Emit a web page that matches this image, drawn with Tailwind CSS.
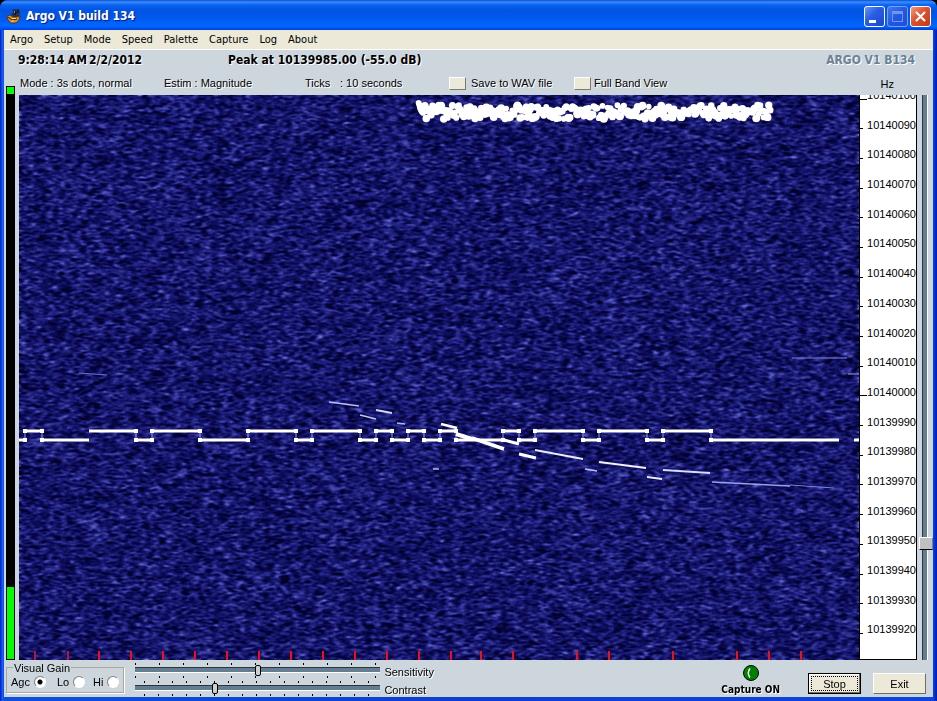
<!DOCTYPE html>
<html lang="en">
<head>
    <meta charset="UTF-8">
    <meta name="viewport" content="width=device-width, initial-scale=1.0">
    <title>Argo V1 build 134</title>
    <script src="https://cdn.jsdelivr.net/npm/@tailwindcss/browser@4"></script>
</head>
<body class="bg-black h-screen overflow-hidden font-['Liberation_Sans',Arial,sans-serif] text-[11px] leading-4 text-black">
    <div class="h-full flex flex-col rounded-t-lg overflow-hidden bg-[#0a3fd8]">
        <!-- Title bar -->
        <header class="h-[30px] shrink-0 flex items-center pl-1.5 pr-1.5 pt-0.5 bg-[linear-gradient(to_bottom,#0a4fd0_0,#3a8cff_2px,#0a62f0_5px,#0254e3_10px,#0058ee_18px,#0066ff_25px,#0061fb_27px,#003dd7_30px)]">
            <svg class="w-4 h-4 shrink-0" viewBox="0 0 16 16" aria-hidden="true">
                <path d="M6 2l3-1 4 1 1 3-1 4-4 1-2-2-2-1 1-2h2z" fill="#26324f"/>
                <path d="M8 3l2 1-1 3M12 1l1 3M7 5l5-1" stroke="#0b1020" fill="none"/>
                <path d="M1 8l3-1 3 2 3 0 4-1-1 4-3 3H5l-3-3z" fill="#d98a1c" stroke="#3a2208" stroke-width=".7"/>
                <path d="M2 9l4 3 5-1" stroke="#3a2208" fill="none"/>
                <path d="M6 10.5h4M5 13h3" stroke="#ffd37a"/>
                <path d="M8 4h1" stroke="#fff"/>
            </svg>
            <h1 class="ml-1 flex-1 whitespace-nowrap font-['DejaVu_Sans_Condensed','DejaVu_Sans',sans-serif] font-bold text-[12px] leading-4 text-white [text-shadow:1px_1px_1px_#0a1883]">Argo V1 build 134</h1>
            <div class="flex gap-0.5">
                <button type="button" aria-label="Minimize" class="w-[21px] h-[21px] rounded-[3px] border border-white bg-[linear-gradient(135deg,#6d96f5,#2a5fe8_40%,#1a45c8)] flex items-end pl-1 pb-[3px]">
                    <span class="block w-[7px] h-[3px] bg-white"></span>
                </button>
                <button type="button" aria-label="Maximize" disabled class="w-[21px] h-[21px] rounded-[3px] border border-[#7b9ff0] bg-[linear-gradient(135deg,#4478ec,#2158e2_50%,#1a4fdc)] flex items-center justify-center">
                    <span class="block w-[11px] h-[11px] border border-t-[3px] border-[#6f95ef]"></span>
                </button>
                <button type="button" aria-label="Close" class="w-[21px] h-[21px] rounded-[3px] border border-white bg-[linear-gradient(135deg,#f09a80,#e0502c_45%,#c03a18)] flex items-center justify-center">
                    <svg class="w-[13px] h-[13px]" viewBox="0 0 13 13" aria-hidden="true"><path d="M2 2l9 9M11 2l-9 9" stroke="#fff" stroke-width="2.2"/></svg>
                </button>
            </div>
        </header>

        <div class="flex-1 min-h-0 flex flex-col px-1 pb-1 bg-[linear-gradient(to_right,#0026d0_0,#0026d0_1px,#1b62f5_2px,#0c50e0_4px,#0c3fd0_50%,#0a46e0_calc(100%-4px),#0030d0_calc(100%-2px),#001cb0_100%)]">
            <!-- Menu -->
            <nav class="h-5 shrink-0 flex items-center gap-[11px] pl-1.5 bg-[#ece9d8] border-b border-white font-['DejaVu_Sans_Condensed','DejaVu_Sans',sans-serif] text-[11px]">
                <a href="#">Argo</a>
                <a href="#">Setup</a>
                <a href="#">Mode</a>
                <a href="#">Speed</a>
                <a href="#">Palette</a>
                <a href="#">Capture</a>
                <a href="#">Log</a>
                <a href="#">About</a>
            </nav>

            <main class="flex-1 min-h-0 flex flex-col bg-[#ced6dd]">
                <!-- Clock and peak -->
                <div class="h-6 shrink-0 flex items-start pt-0.5 pl-3.5 pr-[18px] whitespace-nowrap font-['DejaVu_Sans_Condensed','DejaVu_Sans',sans-serif] font-bold text-[12px] [text-shadow:1px_1px_0_#fff]">
                    <span class="w-[71px]">9:28:14 AM</span>
                    <span class="w-[139px]">2/2/2012</span>
                    <span class="flex-1">Peak at 10139985.00 (-55.0 dB)</span>
                    <span class="text-[#6b8296]">ARGO V1 B134</span>
                </div>
                <!-- Mode line -->
                <div class="h-[21px] shrink-0 flex items-start pl-0.5 pr-[39px] whitespace-nowrap [text-shadow:1px_1px_0_#fff]">
                    <span class="self-end w-[9px] h-[9px] bg-[#00ff00] border border-black mr-[5px]"></span>
                    <span class="w-36 pt-px">Mode : 3s dots, normal</span>
                    <span class="w-[141px] pt-px">Estim : Magnitude</span>
                    <span class="w-[35px] pt-px">Ticks</span>
                    <span class="w-[109px] pt-px">: 10 seconds</span>
                    <label class="flex items-center w-[125px] pt-px">
                        <input type="checkbox" class="appearance-none w-[17px] h-[13px] mr-[5px] bg-[#ece9d8] border border-t-white border-l-white border-b-[#7c7a6c] border-r-[#7c7a6c]">
                        Save to WAV file
                    </label>
                    <label class="flex items-center flex-1 pt-px">
                        <input type="checkbox" class="appearance-none w-[17px] h-[13px] mr-[3px] bg-[#ece9d8] border border-t-white border-l-white border-b-[#7c7a6c] border-r-[#7c7a6c]">
                        Full Band View
                    </label>
                    <span class="pt-0.5 [text-shadow:none]">Hz</span>
                </div>

                <div class="flex-1 min-h-0 flex">
                    <!-- Level meter -->
                    <div class="ml-0.5 mr-1 w-[9px] shrink-0 bg-black p-px flex flex-col justify-end">
                        <div class="w-full bg-[#00ff00]" style="height: 12.8%"></div>
                    </div>
                    <!-- Waterfall -->
                    <div class="flex-1 min-w-0 min-h-0">
                        <canvas id="waterfall" width="840" height="565" class="block w-full h-full bg-[#10125c]"></canvas>
                    </div>
                    <!-- Frequency scale -->
                    <div id="scale" class="w-[58px] shrink-0 bg-white border-x border-b border-black flex flex-col overflow-hidden text-[11px]"></div>
                    <input type="range" min="0" max="100" value="80" aria-label="Tuning" class="ml-0.5 w-3.5 shrink-0 h-full appearance-none [writing-mode:vertical-lr] bg-[linear-gradient(to_right,transparent_3px,#2b3640_3px,#2b3640_4px,#647d91_4px,#647d91_8px,#fff_8px,#fff_9px,transparent_9px)] [&::-webkit-slider-thumb]:appearance-none [&::-webkit-slider-thumb]:w-3.5 [&::-webkit-slider-thumb]:h-[13px] [&::-webkit-slider-thumb]:bg-[#c0c0c0] [&::-webkit-slider-thumb]:border [&::-webkit-slider-thumb]:border-t-white [&::-webkit-slider-thumb]:border-l-white [&::-webkit-slider-thumb]:border-r-[#808080] [&::-webkit-slider-thumb]:border-b-black">
                </div>

                <!-- Bottom controls -->
                <footer class="h-[37px] shrink-0 flex items-start pl-0.5 pr-[7px] whitespace-nowrap">
                    <fieldset class="w-[118px] h-[33px] border border-[#aca899] shadow-[1px_1px_0_#fff] px-1">
                        <legend class="ml-0.5 px-px leading-4 h-3.5">Visual Gain</legend>
                        <div class="flex items-center">
                            <label class="flex items-center gap-1 w-[46px]">Agc <input type="radio" name="gain" checked class="appearance-none w-3 h-3 rounded-full border border-[#808080] border-r-white border-b-white bg-[radial-gradient(circle,#000_2px,#fff_3px)]"></label>
                            <label class="flex items-center gap-1 w-9">Lo <input type="radio" name="gain" class="appearance-none w-3 h-3 rounded-full border border-[#808080] border-r-white border-b-white bg-white"></label>
                            <label class="flex items-center gap-1">Hi <input type="radio" name="gain" class="appearance-none w-3 h-3 rounded-full border border-[#808080] border-r-white border-b-white bg-white"></label>
                        </div>
                    </fieldset>
                    <div class="ml-[11px] pt-[3px] w-[245px] flex flex-col">
                        <div class="h-[18px] flex flex-col">
                            <div class="h-0.5 w-full bg-[repeating-linear-gradient(to_right,#000_0,#000_1px,transparent_1px,transparent_24px)]"></div>
                            <input id="sensitivity" type="range" min="0" max="100" value="50" class="block w-full h-[11px] appearance-none bg-[linear-gradient(to_bottom,transparent_2px,#2b3640_2px,#2b3640_3px,#647d91_3px,#647d91_7px,#fff_7px,#fff_8px,transparent_8px)] [&::-webkit-slider-thumb]:appearance-none [&::-webkit-slider-thumb]:w-1.5 [&::-webkit-slider-thumb]:h-[11px] [&::-webkit-slider-thumb]:rounded-xs [&::-webkit-slider-thumb]:border [&::-webkit-slider-thumb]:border-black [&::-webkit-slider-thumb]:bg-[#d0d0d0]">
                            <div class="h-0.5 w-full bg-[repeating-linear-gradient(to_right,#000_0,#000_1px,transparent_1px,transparent_24px)]"></div>
                        </div>
                        <div class="h-4 flex flex-col">
                            <div class="h-0.5 ml-[9px] mr-[9px] bg-[repeating-linear-gradient(to_right,#000_0,#000_1px,transparent_1px,transparent_14px)]"></div>
                            <input id="contrast" type="range" min="0" max="100" value="32" class="block w-full h-[11px] appearance-none bg-[linear-gradient(to_bottom,transparent_2px,#2b3640_2px,#2b3640_3px,#647d91_3px,#647d91_7px,#fff_7px,#fff_8px,transparent_8px)] [&::-webkit-slider-thumb]:appearance-none [&::-webkit-slider-thumb]:w-1.5 [&::-webkit-slider-thumb]:h-[11px] [&::-webkit-slider-thumb]:rounded-xs [&::-webkit-slider-thumb]:border [&::-webkit-slider-thumb]:border-black [&::-webkit-slider-thumb]:bg-[#d0d0d0]">
                            <div class="h-0.5 ml-[9px] mr-[9px] bg-[repeating-linear-gradient(to_right,#000_0,#000_1px,transparent_1px,transparent_14px)]"></div>
                        </div>
                    </div>
                    <div class="ml-1 pt-1 flex flex-col gap-0.5 [text-shadow:1px_1px_0_#fff]">
                        <label for="sensitivity">Sensitivity</label>
                        <label for="contrast">Contrast</label>
                    </div>
                    <div class="ml-auto mr-7 pt-[5px] flex flex-col items-center">
                        <svg class="w-4 h-4" viewBox="0 0 16 16" aria-hidden="true">
                            <circle cx="8" cy="8" r="7.5" fill="#008000" stroke="#000"/>
                            <path d="M7 3.5Q3.500 8 7 12.5" stroke="#fff" stroke-width="1.4" fill="none"/>
                        </svg>
                        <span class="pt-px font-['DejaVu_Sans_Condensed','DejaVu_Sans',sans-serif] font-bold text-[10px] [text-shadow:1px_1px_0_#fff]">Capture ON</span>
                    </div>
                    <button type="button" class="mt-[13px] mr-3 w-[53px] h-[21px] p-0.5 bg-[#ece9d8] border border-black shadow-[inset_-1px_-1px_0_#716f64,inset_1px_1px_0_#fff]">
                        <span class="h-full flex items-center justify-center outline-1 outline-dotted -outline-offset-1 outline-black">Stop</span>
                    </button>
                    <button type="button" class="mt-[13px] w-[53px] h-[21px] bg-[#ece9d8] border border-t-white border-l-white border-b-[#716f64] border-r-[#716f64]">Exit</button>
                </footer>
            </main>
        </div>
    </div>

    <script>
        // frequency scale
        const scale = document.getElementById('scale');
        for (let hz = 10140100; hz >= 10139920; hz -= 10) {
            const row = document.createElement('div');
            row.className = 'flex-1 min-h-0';
            const tick = hz % 100 === 0 ? 'w-[7px]' : 'w-[3px]';
            row.innerHTML = '<div class="h-0 flex items-center justify-between">' +
                '<span class="h-px mt-2 bg-black ' + tick + '"></span>' +
                '<span>' + hz + '</span></div>';
            scale.appendChild(row);
        }

        const canvas = document.getElementById('waterfall');
        const ctx = canvas.getContext('2d');
        const W = canvas.width, H = canvas.height;
        let seed = 134;
        function rand() {
            seed = (seed + 0x6d2b79f5) | 0;
            let t = Math.imul(seed ^ (seed >>> 15), 1 | seed);
            t = (t + Math.imul(t ^ (t >>> 7), 61 | t)) ^ t;
            return ((t ^ (t >>> 14)) >>> 0) / 4294967296;
        }

        // background noise, smeared along the time axis
        function drawNoise() {
            const raw = new Float32Array(W * H);
            for (let i = 0; i < raw.length; i++) raw[i] = rand();
            const img = ctx.createImageData(W, H);
            const kx = [0.3, 0.7, 1, 1, 1, 0.7, 0.3];
            const ky = [0.5, 1, 0.5];
            for (let y = 0; y < H; y++) {
                for (let x = 0; x < W; x++) {
                    let sum = 0;
                    for (let j = 0; j < 3; j++) {
                        const yy = Math.min(H - 1, Math.max(0, y + j - 1)) * W;
                        for (let i = 0; i < 7; i++) {
                            sum += raw[yy + Math.min(W - 1, Math.max(0, x + i - 3))] * kx[i] * ky[j];
                        }
                    }
                    // z is the deviation from the mean, about -3 to 3
                    const z = (sum / 10 - 0.5) / 0.072;
                    const v = Math.max(0, 0.84 + z * 0.33);
                    const p = (y * W + x) * 4;
                    img.data[p] = Math.min(210, 2 + 24 * v * v);
                    img.data[p + 1] = Math.min(210, 2 + 25 * v * v);
                    img.data[p + 2] = Math.min(255, 34 + 82 * v);
                    img.data[p + 3] = 255;
                }
            }
            ctx.putImageData(img, 0, 0);
        }

        function line(x1, y1, x2, y2, width, color) {
            ctx.strokeStyle = color || '#fff';
            ctx.lineWidth = width;
            ctx.beginPath();
            ctx.moveTo(x1, y1);
            ctx.lineTo(x2, y2);
            ctx.stroke();
        }

        // keyed carrier: [start, end, high?]
        const keys = [
            [0, 6, 0], [6, 23, 1], [23, 70, 0], [70, 117, 1], [117, 133, 0], [133, 181, 1],
            [181, 229, 0], [229, 277, 1], [277, 293, 0], [293, 341, 1], [341, 357, 0], [357, 373, 1],
            [373, 389, 0], [389, 405, 1], [405, 421, 0], [421, 437, 1], [437, 484, 0], [484, 500, 1],
            [500, 516, 0], [516, 564, 1], [564, 580, 0], [580, 628, 1], [628, 644, 0], [644, 692, 1],
            [692, 820, 0], [835, 840, 0]
        ];
        // drifting echo: x1, y1, x2, y2, width, color
        const drift = [
            [310, 307, 340, 311, 1.5, '#b8bcff'], [341, 320, 357, 324, 1.5, '#c0c4ff'],
            [357, 315, 373, 318, 2, '#d0d4ff'], [378, 328, 386, 329, 1.5, '#b0b4ff'],
            [422, 329, 438, 333, 2.5, '#fff'], [437, 339, 453, 344, 4, '#fff'],
            [453, 343, 485, 354, 3.5, '#fff'], [485, 345, 500, 349, 3, '#fff'],
            [500, 359, 517, 363, 3, '#fff'], [516, 355, 564, 364, 2.2, '#e8eaff'],
            [566, 374, 578, 376, 1.5, '#c0c4ff'], [580, 367, 627, 373, 2.2, '#f0f0ff'],
            [628, 382, 643, 384, 2.2, '#e8eaff'], [644, 375, 691, 378, 1.8, '#d8dcff'],
            [693, 387, 771, 391, 1.5, '#9a9ff0'], [771, 390, 815, 393, 1, '#7c82e0'],
            [773, 263, 828, 263, 1.2, '#8086e0'], [829, 279, 840, 279, 1.2, '#8086e0'],
            [60, 278, 88, 280, 1, '#6c72d8'], [414, 374, 420, 374, 1.5, '#b0b4ff']
        ];

        function drawSignals() {
            keys.forEach(function (k, i) {
                const y = k[2] ? 336 : 345;
                line(k[0], y, k[1], y, 3);
                if (i > 0 && k[0] !== 70 && k[0] !== 835) {
                    line(k[0], 336, k[0], 345, 1, '#9ca0f0');
                    ctx.fillStyle = '#fff';
                    ctx.fillRect(k[0] - 2, 334, 4, 4);
                    ctx.fillRect(k[0] - 2, 343, 4, 4);
                }
            });
            drift.forEach(function (d) { line(d[0], d[1], d[2], d[3], d[4], d[5]); });

            // strong band at the top
            ctx.fillStyle = '#fff';
            function blob(x, y) {
                ctx.beginPath();
                ctx.arc(x, y, 2.8 + rand() * 1.2, 0, 7);
                ctx.fill();
            }
            for (let y = 8; y < 20; y += 2) blob(396 + y * 0.45, y);
            for (let x = 406; x < 750; x += 1.25) blob(x, 10 + rand() * 14);
            blob(751, 15);
        }

        function drawTimeTicks() {
            const ticks = [16, 49, 80, 112, 144, 176, 208, 240, 272, 304, 336, 368, 400, 432, 462,
                494, 558, 590, 654, 718, 750, 782];
            ticks.forEach(function (x, i) {
                ctx.fillStyle = i < 2 ? '#b01838' : '#f01010';
                ctx.fillRect(x - 1, H - 9, 2, 9);
            });
        }

        drawNoise();
        drawSignals();
        drawTimeTicks();
    </script>
</body>
</html>
